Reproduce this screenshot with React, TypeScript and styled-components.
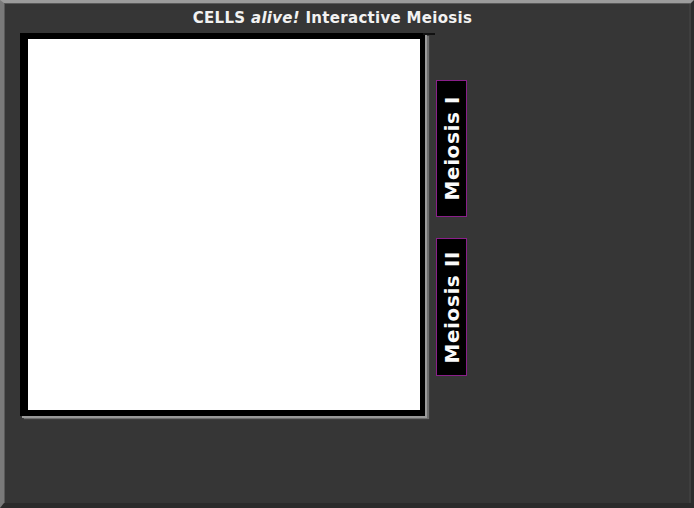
import React from "react";
import styled, { createGlobalStyle } from "styled-components";

const Global = createGlobalStyle`
  html, body { margin: 0; padding: 0; background: #363636; }
  body { width: 694px; height: 508px; overflow: hidden; }
`;

const Frame = styled.div`
  box-sizing: border-box;
  width: 694px;
  height: 508px;
  background: #363636;
  border-top: 3px solid #9c9c9c;
  border-left: 4px solid #7a7a7a;
  border-right: 3px solid #2c2c2c;
  border-bottom: 5px solid #2b2b2b;
  box-shadow: inset 1px 1px 0 #5a5a5a, inset -2px 0 0 #3e3e3e;
  display: flex;
  flex-direction: column;
  font-family: "DejaVu Sans", "Liberation Sans", sans-serif;
  color: #f2f2f2;
`;

const Header = styled.h1`
  margin: 0;
  height: 30px;
  box-sizing: border-box;
  padding: 6px 30px 0 0;
  text-align: center;
  font-size: 15px;
  font-weight: bold;
  line-height: 18px;
  letter-spacing: 0.3px;
  em { font-style: italic; }
`;

const Body = styled.div`
  display: flex;
  align-items: flex-start;
  padding-left: 16px;
`;

const Stage = styled.div`
  position: relative;
  box-sizing: border-box;
  width: 405px;
  height: 383px;
  background: #ffffff;
  border-style: solid;
  border-color: #000;
  border-width: 6px 5px 6px 8px;
  box-shadow: 2px 2px 0 #9a9a9a, 4px 3px 1px #6e6e6e;
  &::before {
    content: "";
    position: absolute;
    top: -6px;
    right: -15px;
    width: 12px;
    height: 2px;
    background: #111;
  }
`;

const Side = styled.div`
  display: flex;
  flex-direction: column;
  gap: 21px;
  margin-left: 11px;
  padding-top: 47px;
`;

const StageButton = styled.button<{ $h: number }>`
  box-sizing: border-box;
  width: 31px;
  height: ${(p) => p.$h}px;
  padding: 0;
  background: #000;
  border: 1px solid #8a1f8a;
  color: #fafafa;
  font-family: "DejaVu Sans", "Liberation Sans", sans-serif;
  font-weight: bold;
  font-size: 20px;
  letter-spacing: 0.6px;
  display: flex;
  align-items: center;
  justify-content: center;
  cursor: pointer;
  span {
    writing-mode: vertical-rl;
    transform: rotate(180deg);
    white-space: nowrap;
    line-height: 1;
  }
`;

export default function App() {
  return (
    <>
      <Global />
      <Frame>
        <Header>
          CELLS <em>alive!</em> Interactive Meiosis
        </Header>
        <Body>
          <Stage />
          <Side>
            <StageButton $h={137}>
              <span>Meiosis I</span>
            </StageButton>
            <StageButton $h={138}>
              <span>Meiosis II</span>
            </StageButton>
          </Side>
        </Body>
      </Frame>
    </>
  );
}
